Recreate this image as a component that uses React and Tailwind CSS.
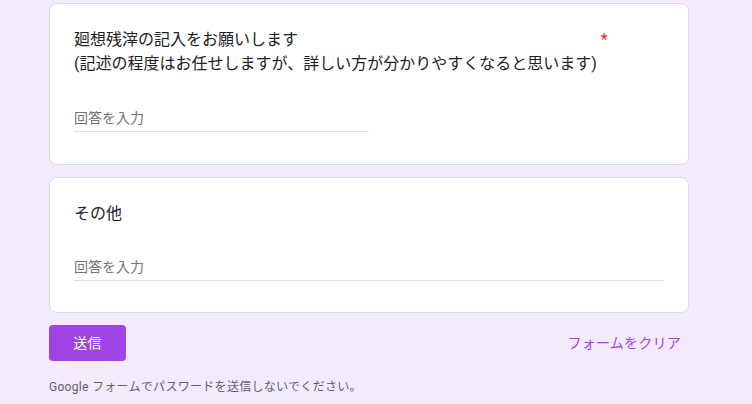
import React from 'react';

const font = { fontFamily: 'Roboto, "Noto Sans CJK JP", sans-serif' };

const Card = ({ children, pb }) => (
  <div className={`bg-white border border-[#dadce0] rounded-lg px-6 pt-6 ${pb}`}>
    {children}
  </div>
);

const AnswerInput = ({ wide, mt }) => (
  <div className={`${mt} ${wide ? 'w-full' : 'w-1/2'} border-b border-[#e0e0e0] pb-[3px]`}>
    <div className="text-[14px] leading-5 text-[#70757a]">回答を入力</div>
  </div>
);

export default function App() {
  return (
    <div
      className="min-h-screen w-full bg-[#f3ebfc] text-[#202124]"
      style={font}
    >
      <div className="w-[640px] ml-[49px] pt-[3px] flex flex-col gap-3">
        {/* Question 1 */}
        <Card pb="pb-8">
          <div className="flex items-start">
            <div className="text-[16px] leading-6">
              <div>廻想残滓の記入をお願いします</div>
              <div>(記述の程度はお任せしますが、詳しい方が分かりやすくなると思います)</div>
            </div>
            <span className="pl-1 text-[16px] leading-6 text-[#d93025]">*</span>
          </div>
          <AnswerInput mt="mt-8" />
        </Card>

        {/* Question 2 */}
        <Card pb="pb-[31px]">
          <div className="text-[16px] leading-6">その他</div>
          <AnswerInput wide mt="mt-[31px]" />
        </Card>

        {/* Actions */}
        <div className="flex items-center justify-between">
          <button className="w-[77px] h-9 rounded bg-[#a142e5] text-white text-[14px] tracking-[0.25px]">
            送信
          </button>
          <button className="px-2 h-9 text-[14px] text-[#a142e5] tracking-[0.25px]">
            フォームをクリア
          </button>
        </div>

        <div className="text-[12px] leading-4 text-[#5f6368] tracking-[0.3px] mt-[6px]">
          Google フォームでパスワードを送信しないでください。
        </div>
      </div>
    </div>
  );
}
